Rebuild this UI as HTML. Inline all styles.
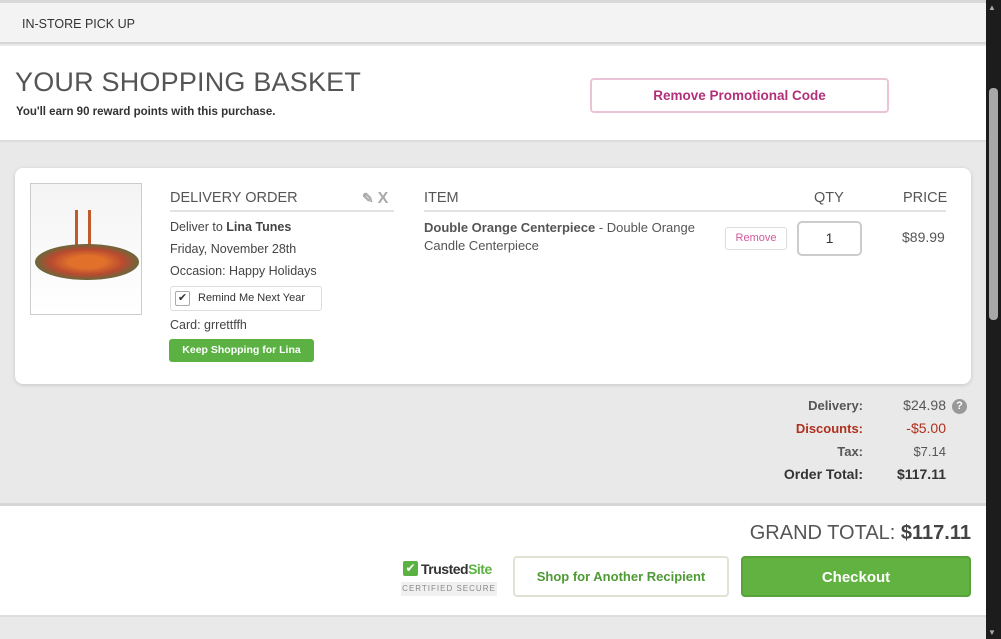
<!DOCTYPE html>
<html><head><style>
*{box-sizing:border-box;margin:0;padding:0}
body{width:1001px;height:639px;overflow:hidden;background:#e9e9e9;font-family:"Liberation Sans",sans-serif;color:#444;position:relative}
.abs{position:absolute}
.sb{left:986px;top:0;width:15px;height:639px;background:#1c1c1c}
.thumb{left:989px;top:88px;width:9px;height:232px;background:#a8a8a8;border-radius:4px}
.b{font-weight:bold}
</style></head><body>
<div class="abs" style="left:0;top:0;width:986px;height:3px;background:#d8d8d8"></div>
<div class="abs" style="left:0;top:3px;width:986px;height:41px;background:#f3f3f3;border-bottom:2px solid #d6d6d6"></div>
<div class="abs" style="left:22px;top:17px;font-size:12.5px;color:#333">IN-STORE PICK UP</div>
<div class="abs" style="left:0;top:46px;width:986px;height:96px;background:#fff;border-bottom:2px solid #ddd"></div>
<div class="abs" style="left:15px;top:67px;font-size:27px;color:#555;letter-spacing:0.2px">YOUR SHOPPING BASKET</div>
<div class="abs b" style="left:16px;top:106px;font-size:11.5px;color:#333">You'll earn 90 reward points with this purchase.</div>
<div class="abs b" style="left:590px;top:78px;width:299px;height:35px;border:2px solid #ecc3d6;border-radius:4px;color:#b2307a;font-size:13.5px;text-align:center;line-height:31px">Remove Promotional Code</div>

<div class="abs" style="left:15px;top:168px;width:956px;height:216px;background:#fff;border-radius:8px;box-shadow:0 1px 4px rgba(0,0,0,.15)"></div>
<div class="abs" style="left:30px;top:183px;width:112px;height:132px;border:1px solid #ccc;background:linear-gradient(#f4f4f4,#fff)">
<div class="abs" style="left:44px;top:26px;width:3px;height:50px;background:#c05a2a"></div>
<div class="abs" style="left:57px;top:26px;width:3px;height:50px;background:#c05a2a"></div>
<div class="abs" style="left:4px;top:60px;width:104px;height:36px;border-radius:50%;background:radial-gradient(ellipse,#e0702a 25%,#b84a30 50%,#5b6e3e 75%,transparent 78%)"></div>
</div>
<div class="abs" style="left:170px;top:190px;font-size:14.5px;color:#555">DELIVERY ORDER</div>
<div class="abs b" style="left:362px;top:190px;font-size:14px;color:#aaa">✎ <span style="font-size:16px">X</span></div>
<div class="abs" style="left:170px;top:210px;width:224px;height:2px;background:#e3e3e3"></div>
<div class="abs" style="left:170px;top:216px;font-size:12.5px;line-height:22px;color:#444">Deliver to <b>Lina Tunes</b><br>Friday, November 28th<br>Occasion: Happy Holidays</div>
<div class="abs" style="left:170px;top:286px;width:152px;height:25px;border:1px solid #ddd;border-radius:3px;font-size:11px;line-height:23px;padding-left:27px;color:#333">Remind Me Next Year</div>
<div class="abs" style="left:175px;top:291px;width:15px;height:15px;border:1px solid #aaa;border-radius:2px;font-size:11px;line-height:13px;text-align:center;color:#333">✔</div>
<div class="abs" style="left:170px;top:318px;font-size:12.5px;color:#444">Card: grrettffh</div>
<div class="abs b" style="left:169px;top:339px;width:145px;height:23px;background:#5bb243;border-radius:3px;color:#fff;font-size:10.5px;line-height:23px;text-align:center">Keep Shopping for Lina</div>

<div class="abs" style="left:424px;top:190px;font-size:14.5px;color:#555">ITEM</div>
<div class="abs" style="left:814px;top:190px;font-size:14.5px;color:#555">QTY</div>
<div class="abs" style="left:903px;top:190px;font-size:14.5px;color:#555">PRICE</div>
<div class="abs" style="left:424px;top:210px;width:522px;height:2px;background:#e3e3e3"></div>
<div class="abs" style="left:424px;top:219px;width:295px;font-size:13px;line-height:18px;color:#555"><b>Double Orange Centerpiece</b> - Double Orange Candle Centerpiece</div>
<div class="abs" style="left:725px;top:227px;width:62px;height:23px;border:1px solid #ddd;border-radius:3px;color:#d05a9a;font-size:11px;line-height:21px;text-align:center">Remove</div>
<div class="abs" style="left:797px;top:221px;width:65px;height:35px;border:2px solid #ccc;border-radius:5px;font-size:14px;line-height:31px;text-align:center;color:#333">1</div>
<div class="abs" style="left:902px;top:229px;font-size:14px;color:#555">$89.99</div>

<div class="abs b" style="left:700px;top:394px;width:163px;text-align:right;font-size:13px;line-height:23px;color:#555">Delivery:<br><span style="color:#b0301e">Discounts:</span><br>Tax:<br><span style="color:#333;font-size:14px">Order Total:</span></div>
<div class="abs" style="left:880px;top:394px;width:66px;text-align:right;font-size:14px;line-height:23px;color:#555">$24.98<br><span style="color:#b0301e">-$5.00</span><br><span style="font-size:13px">$7.14</span><br><b style="color:#333">$117.11</b></div>
<div class="abs b" style="left:952px;top:399px;width:15px;height:15px;border-radius:50%;background:#999;color:#fff;font-size:11px;line-height:15px;text-align:center">?</div>

<div class="abs" style="left:0;top:503px;width:986px;height:3px;background:#d6d6d6"></div>
<div class="abs" style="left:0;top:506px;width:986px;height:111px;background:#fff;border-bottom:2px solid #ddd"></div>
<div class="abs" style="left:700px;top:522px;width:271px;text-align:right;font-size:20px;color:#555">GRAND TOTAL: <b style="color:#444">$117.11</b></div>
<div class="abs" style="left:403px;top:561px;width:15px;height:15px;background:#5bb243;border-radius:2px;color:#fff;font-size:12px;line-height:15px;text-align:center">✔</div>
<div class="abs b" style="left:421px;top:561px;font-size:14px;color:#333;letter-spacing:-0.5px">Trusted<span style="color:#5bb243">Site</span></div>
<div class="abs" style="left:401px;top:582px;width:96px;height:14px;background:#f0f0f0;font-size:8px;color:#888;line-height:14px;text-align:center;letter-spacing:1px">CERTIFIED SECURE</div>
<div class="abs b" style="left:513px;top:556px;width:216px;height:41px;border:2px solid #e2e2d4;border-radius:4px;color:#4e9a34;font-size:13px;line-height:37px;text-align:center">Shop for Another Recipient</div>
<div class="abs b" style="left:741px;top:556px;width:230px;height:41px;background:#62b242;border:2px solid #57a33a;border-radius:4px;color:#fff;font-size:15px;line-height:39px;text-align:center">Checkout</div>

<div class="abs sb"></div>
<div class="abs thumb"></div>
<div class="abs" style="left:988px;top:3px;color:#aaa;font-size:8px">▲</div>
<div class="abs" style="left:988px;top:628px;color:#aaa;font-size:8px">▼</div>
</body></html>
